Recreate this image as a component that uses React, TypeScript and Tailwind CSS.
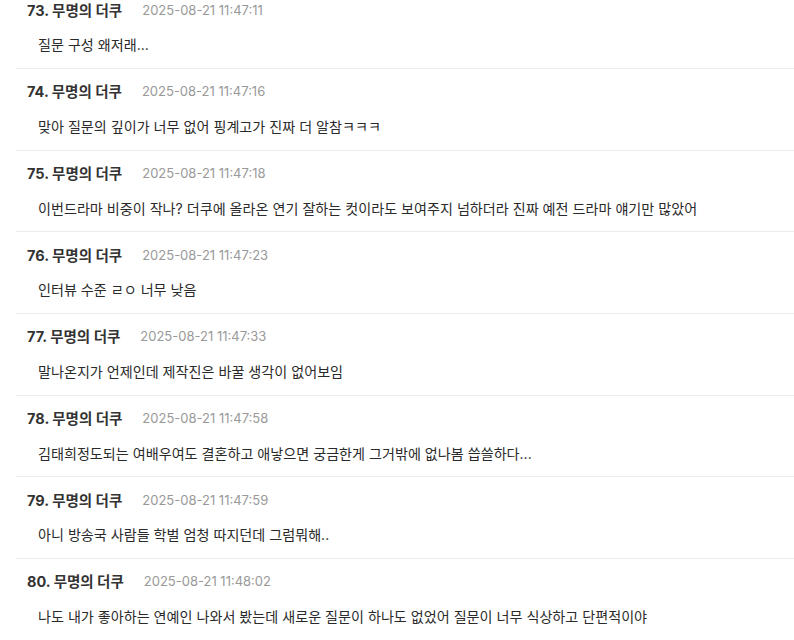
import React from "react";

const items = [
  { n: 73, t: "2025-08-21 11:47:11", c: "질문 구성 왜저래..." },
  { n: 74, t: "2025-08-21 11:47:16", c: "맞아 질문의 깊이가 너무 없어 핑계고가 진짜 더 알참ㅋㅋㅋ" },
  { n: 75, t: "2025-08-21 11:47:18", c: "이번드라마 비중이 작나? 더쿠에 올라온 연기 잘하는 컷이라도 보여주지 넘하더라 진짜 예전 드라마 얘기만 많았어" },
  { n: 76, t: "2025-08-21 11:47:23", c: "인터뷰 수준 ㄹㅇ 너무 낮음" },
  { n: 77, t: "2025-08-21 11:47:33", c: "말나온지가 언제인데 제작진은 바꿀 생각이 없어보임" },
  { n: 78, t: "2025-08-21 11:47:58", c: "김태희정도되는 여배우여도 결혼하고 애낳으면 궁금한게 그거밖에 없나봄 씁쓸하다..." },
  { n: 79, t: "2025-08-21 11:47:59", c: "아니 방송국 사람들 학벌 엄청 따지던데 그럼뭐해.." },
  { n: 80, t: "2025-08-21 11:48:02", c: "나도 내가 좋아하는 연예인 나와서 봤는데 새로운 질문이 하나도 없었어 질문이 너무 식상하고 단편적이야" },
];

export default function App() {
  return (
    <div
      className="w-[794px] h-[640px] overflow-hidden bg-white"
      style={{ fontFamily: '"Inter", "Noto Sans CJK KR", sans-serif' }}
    >
      <div className="-mt-[12.5px] pl-[16px]">
        {items.map((it) => (
          <div key={it.n} className="border-b border-[#ebebeb] pt-[14px] pb-[12.67px]">
            <div className="flex items-center h-[18px] pl-[11px]">
              <span className="text-[14.5px] font-bold text-[#333]">
                {it.n}. 무명의 더쿠
              </span>
              <span className="ml-[20px] text-[13px] text-[#999]">{it.t}</span>
            </div>
            <div className="mt-[15px] h-[21px] flex items-center pl-[22px] text-[14.1px] text-[#2a2a2a]">
              {it.c}
            </div>
          </div>
        ))}
      </div>
    </div>
  );
}
